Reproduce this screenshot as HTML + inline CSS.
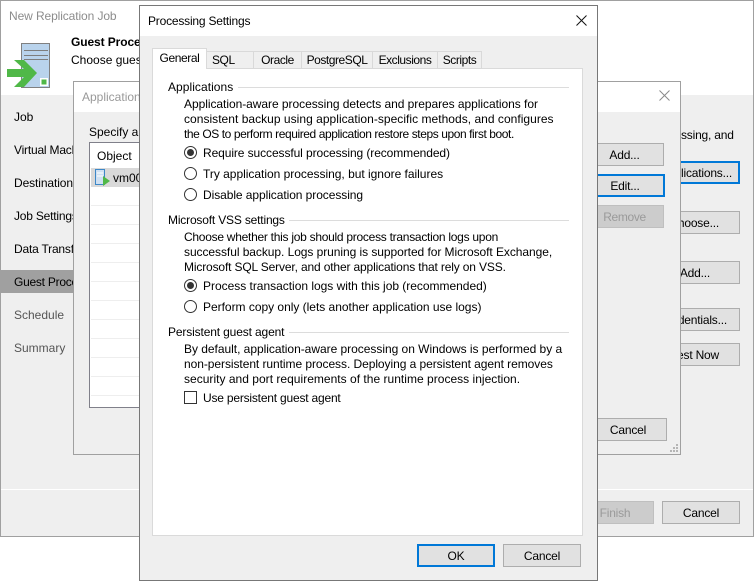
<!DOCTYPE html>
<html><head><meta charset="utf-8"><style>
html,body{margin:0;padding:0;background:#fff}
#r{position:relative;width:754px;height:581px;overflow:hidden;font:12px/16px "Liberation Sans",sans-serif;color:#000;background:#fff}
#r div,#r span{position:absolute;box-sizing:border-box}
.t{white-space:nowrap}
.b{background:#e1e1e1;border:1px solid #adadad;height:23px;text-align:center;line-height:22px;white-space:nowrap;letter-spacing:-.2px}
.f{border:2px solid #0078d7;line-height:20px}
.d{background:#ccc;border-color:#bfbfbf;color:#9a9a9a}
.g{height:1px;background:#dcdcdc}
.r{text-align:right}
.tab{top:51px;height:18px;background:#efefef;border:1px solid #d9d9d9;text-align:center;line-height:17px;letter-spacing:-.45px}
</style></head><body><div id="r">
<!-- main window -->
<div style="left:0;top:0;width:754px;height:537px;background:#fff;border:1px solid #a0a0a0"></div>
<div style="left:1px;top:95px;width:752px;height:441px;background:#efefef"></div>
<div style="left:1px;top:489px;width:752px;height:1px;background:#fff"></div>
<div class="t" style="left:9px;top:8px;color:#8c8c8c;letter-spacing:-.1px">New Replication Job</div>
<svg style="position:absolute;left:0;top:0" width="60" height="95"><rect x="21.500" y="43.500" width="28" height="44" fill="#b9d3ec" stroke="#808080"/><path d="M24 50.500h24M24 55.500h24M24 59.500h24" stroke="#7d7d7d"/><rect x="40" y="78" width="8" height="8" fill="#fff"/><rect x="41.500" y="79.500" width="5" height="5" fill="#50b848"/><path d="M7 69h17L14 60h10l13 13-13 14H14l10-10H7z" fill="#50b848"/></svg>
<div class="t" style="left:71px;top:34px;font-weight:bold;letter-spacing:-.1px">Guest Processing</div>
<div class="t" style="left:71px;top:52px">Choose guest processing options available for running VMs.</div>
<div class="t" style="left:14px;top:109px">Job</div>
<div class="t" style="left:14px;top:142px;letter-spacing:-.2px">Virtual Machines</div>
<div class="t" style="left:14px;top:175px;letter-spacing:-.1px">Destination</div>
<div class="t" style="left:14px;top:208px;letter-spacing:-.2px">Job Settings</div>
<div class="t" style="left:14px;top:241px;letter-spacing:-.2px">Data Transfer</div>
<div style="left:1px;top:270px;width:80px;height:23px;background:#a0a0a0"></div>
<div class="t" style="left:14px;top:274px;letter-spacing:-.25px">Guest Processing</div>
<div class="t" style="left:14px;top:307px;color:#555">Schedule</div>
<div class="t" style="left:14px;top:340px;color:#555">Summary</div>
<div class="t" style="left:681px;top:127px;letter-spacing:-.2px">ssing, and</div>
<div class="b f r" style="left:600px;top:161px;width:140px;padding-right:6px">Applications...</div>
<div class="b r" style="left:600px;top:211px;width:140px;padding-right:20px">Choose...</div>
<div class="b r" style="left:600px;top:261px;width:140px;padding-right:29px">Add...</div>
<div class="b r" style="left:600px;top:308px;width:140px;padding-right:12px">Credentials...</div>
<div class="b r" style="left:600px;top:343px;width:140px;padding-right:20px">Test Now</div>
<div class="b d" style="left:576px;top:501px;width:78px">Finish</div>
<div class="b" style="left:662px;top:501px;width:78px">Cancel</div>
<!-- application dialog -->
<div style="left:73px;top:81px;width:608px;height:374px;background:#efefef;border:1px solid #a0a0a0"></div>
<div style="left:74px;top:82px;width:606px;height:30px;background:#fff"></div>
<div class="t" style="left:82px;top:89px;color:#999">Application-Aware Processing Options</div>
<svg style="position:absolute;left:659px;top:90px" width="12" height="12"><path d="M.5.5l10 10M10.500.5l-10 10" stroke="#8a8a8a" fill="none"/></svg>
<div class="t" style="left:89px;top:124px">Specify application-aware processing</div>
<div style="left:89px;top:142px;width:120px;height:266px;background:#fff;border:1px solid #80808a"></div>
<div class="t" style="left:97px;top:148px">Object</div>
<div style="left:91px;top:168px;width:100px;height:19px;background:#d9d9d9"></div>
<svg style="position:absolute;left:94px;top:168px" width="18" height="20"><rect x="1.500" y="1.500" width="9" height="15" fill="#cfe0f2" stroke="#3d87c7"/><path d="M3 5h6M3 8h6" stroke="#fff"/><path d="M9 8l7 5-7 5z" fill="#50b848"/></svg>
<div class="t" style="left:113px;top:170px">vm001</div>
<div class="g" style="left:91px;top:205px;width:100px;background:#eee"></div>
<div class="g" style="left:91px;top:224px;width:100px;background:#eee"></div>
<div class="g" style="left:91px;top:243px;width:100px;background:#eee"></div>
<div class="g" style="left:91px;top:262px;width:100px;background:#eee"></div>
<div class="g" style="left:91px;top:281px;width:100px;background:#eee"></div>
<div class="g" style="left:91px;top:300px;width:100px;background:#eee"></div>
<div class="g" style="left:91px;top:319px;width:100px;background:#eee"></div>
<div class="g" style="left:91px;top:338px;width:100px;background:#eee"></div>
<div class="g" style="left:91px;top:357px;width:100px;background:#eee"></div>
<div class="g" style="left:91px;top:376px;width:100px;background:#eee"></div>
<div class="g" style="left:91px;top:395px;width:100px;background:#eee"></div>
<div class="b" style="left:585px;top:143px;width:79px">Add...</div>
<div class="b f" style="left:585px;top:174px;width:80px">Edit...</div>
<div class="b d" style="left:585px;top:205px;width:79px;letter-spacing:-.35px">Remove</div>
<div class="b" style="left:589px;top:418px;width:78px">Cancel</div>
<svg style="position:absolute;left:669px;top:443px" width="10" height="10" fill="#b5b5b5"><rect x="7" y="1" width="2" height="2"/><rect x="4" y="4" width="2" height="2"/><rect x="7" y="4" width="2" height="2"/><rect x="1" y="7" width="2" height="2"/><rect x="4" y="7" width="2" height="2"/><rect x="7" y="7" width="2" height="2"/></svg>
<!-- processing settings -->
<div style="left:139px;top:5px;width:459px;height:576px;background:#efefef;border:1px solid #777"></div>
<div style="left:140px;top:6px;width:457px;height:30px;background:#fff"></div>
<div class="t" style="left:148px;top:13px;letter-spacing:-.2px">Processing Settings</div>
<svg style="position:absolute;left:576px;top:15px" width="12" height="12"><path d="M.5.5l10 10M10.500.5l-10 10" stroke="#111" fill="none"/></svg>
<div style="left:152px;top:68px;width:431px;height:468px;background:#fff;border:1px solid #dadada"></div>
<div class="tab" style="left:206px;width:48px;text-align:left;padding-left:5px">SQL</div>
<div class="tab" style="left:253px;width:49px">Oracle</div>
<div class="tab" style="left:301px;width:72px">PostgreSQL</div>
<div class="tab" style="left:372px;width:66px">Exclusions</div>
<div class="tab" style="left:437px;width:45px">Scripts</div>
<div style="left:152px;top:48px;width:55px;height:21px;background:#fff;border:1px solid #dadada;border-bottom:0;text-align:center;line-height:19px;letter-spacing:-.4px">General</div>
<div class="t" style="left:168px;top:79px;letter-spacing:.05px">Applications</div><div class="g" style="left:238px;top:87px;width:331px"></div>
<div class="t" style="left:184px;top:96px;letter-spacing:-.045px">Application-aware processing detects and prepares applications for</div>
<div class="t" style="left:184px;top:111px;letter-spacing:.03px">consistent backup using application-specific methods, and configures</div>
<div class="t" style="left:184px;top:126px;letter-spacing:-.42px">the OS to perform required application restore steps upon first boot.</div>
<svg style="position:absolute;left:183px;top:145px" width="16" height="58" fill="#fff" stroke="#333"><circle cx="7.500" cy="7.500" r="6"/><circle cx="7.500" cy="7.500" r="3.500" fill="#333" stroke="none"/><circle cx="7.500" cy="28.500" r="6"/><circle cx="7.500" cy="49.500" r="6"/></svg>
<div class="t" style="left:203px;top:145px;letter-spacing:-.09px">Require successful processing (recommended)</div>
<div class="t" style="left:203px;top:166px;letter-spacing:-.02px">Try application processing, but ignore failures</div>
<div class="t" style="left:203px;top:187px;letter-spacing:-.07px">Disable application processing</div>
<div class="t" style="left:168px;top:212px;letter-spacing:-.18px">Microsoft VSS settings</div><div class="g" style="left:289px;top:220px;width:280px"></div>
<div class="t" style="left:184px;top:229px;letter-spacing:-.27px">Choose whether this job should process transaction logs upon</div>
<div class="t" style="left:184px;top:244px;letter-spacing:-.06px">successful backup. Logs pruning is supported for Microsoft Exchange,</div>
<div class="t" style="left:184px;top:259px;letter-spacing:-.15px">Microsoft SQL Server, and other applications that rely on VSS.</div>
<svg style="position:absolute;left:183px;top:278px" width="16" height="37" fill="#fff" stroke="#333"><circle cx="7.500" cy="7.500" r="6"/><circle cx="7.500" cy="7.500" r="3.500" fill="#333" stroke="none"/><circle cx="7.500" cy="28.500" r="6"/></svg>
<div class="t" style="left:203px;top:278px;letter-spacing:-.02px">Process transaction logs with this job (recommended)</div>
<div class="t" style="left:203px;top:299px;letter-spacing:-.02px">Perform copy only (lets another application use logs)</div>
<div class="t" style="left:168px;top:324px;letter-spacing:-.14px">Persistent guest agent</div><div class="g" style="left:289px;top:332px;width:280px"></div>
<div class="t" style="left:184px;top:341px;letter-spacing:-.03px">By default, application-aware processing on Windows is performed by a</div>
<div class="t" style="left:184px;top:356px;letter-spacing:-.06px">non-persistent runtime process. Deploying a persistent agent removes</div>
<div class="t" style="left:184px;top:371px;letter-spacing:.02px">security and port requirements of the runtime process injection.</div>
<div style="left:184px;top:391px;width:13px;height:13px;background:#fff;border:1px solid #333"></div>
<div class="t" style="left:203px;top:390px;letter-spacing:-.2px">Use persistent guest agent</div>
<div class="b f" style="left:417px;top:544px;width:78px">OK</div>
<div class="b" style="left:503px;top:544px;width:78px">Cancel</div>
</div></body></html>
